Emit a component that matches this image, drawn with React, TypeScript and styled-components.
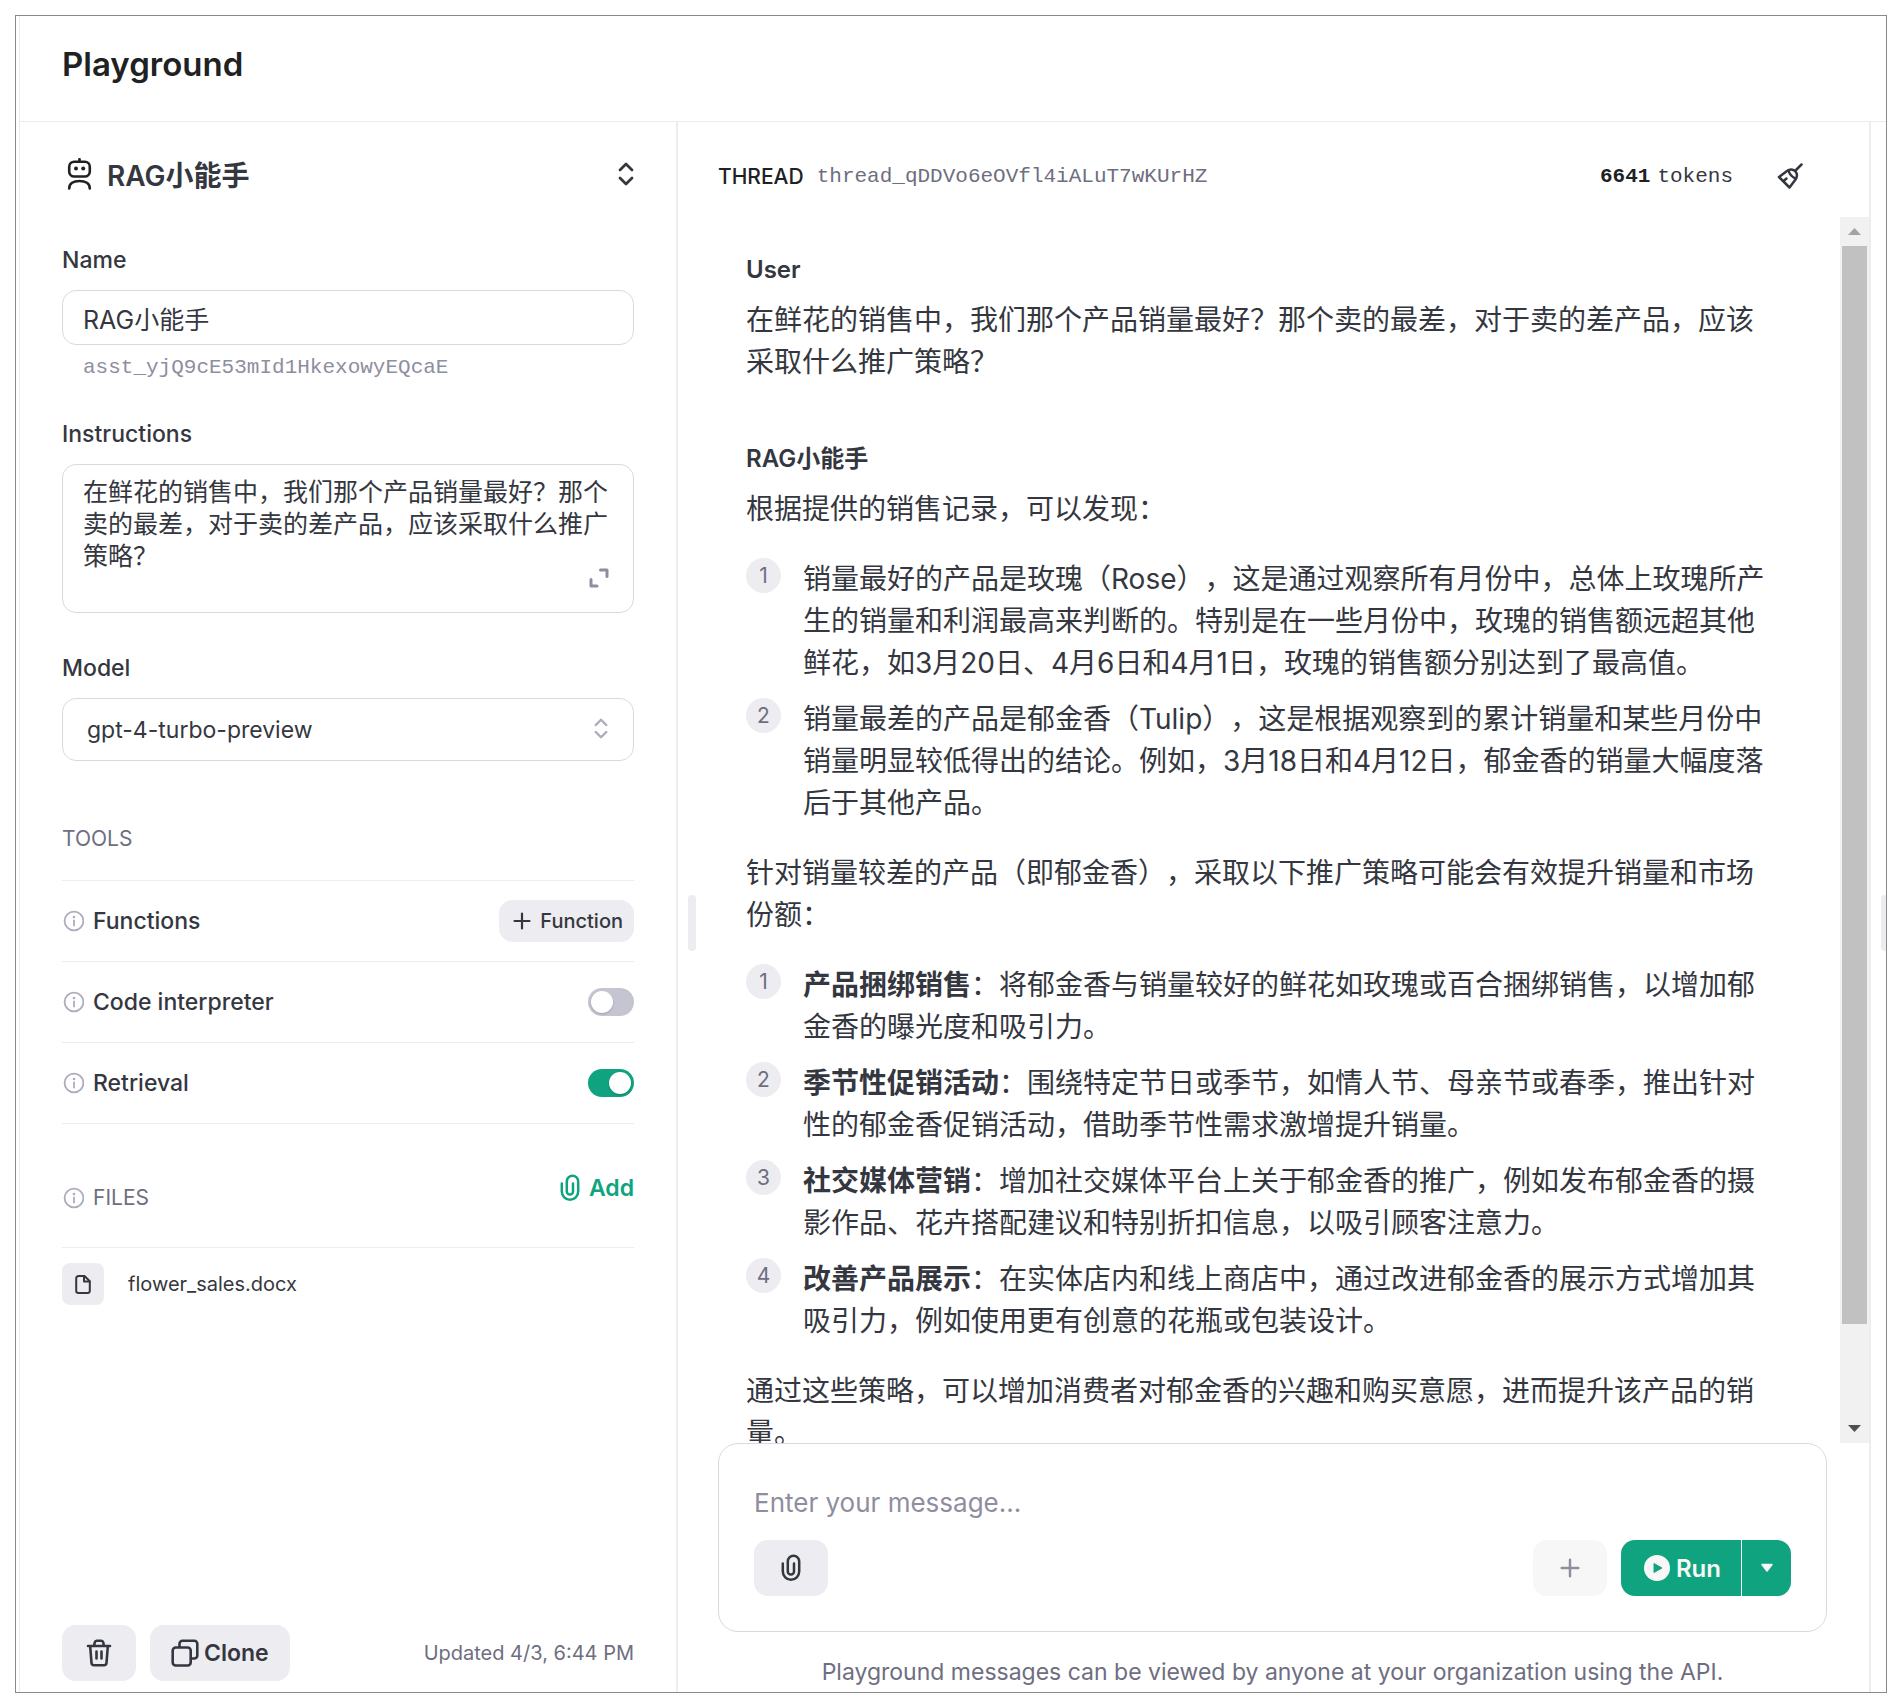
import React from "react";
import styled, { createGlobalStyle } from "styled-components";

const sans = `Inter, "Noto Sans CJK SC", sans-serif`;
const mono = `"Liberation Mono", "Noto Sans CJK SC", monospace`;

const color = {
  text: "#353740",
  strong: "#202123",
  muted: "#6e6e80",
  faint: "#8e8ea0",
  line: "#ececf1",
  field: "#d9d9e3",
  fill: "#ececf1",
  green: "#10a37f",
};

const GlobalStyle = createGlobalStyle`
  * { box-sizing: border-box; }
  body {
    margin: 0;
    background: #fff;
    color: ${color.text};
    font-family: ${sans};
    font-size: 23px;
    text-spacing-trim: space-all;
  }
  button, input, textarea, select { font: inherit; color: inherit; margin: 0; }
  button { cursor: pointer; border: 0; padding: 0; background: none; }
  p, h1, h2, h3, ol { margin: 0; padding: 0; font-weight: inherit; font-size: inherit; }
`;

const Page = styled.div`
  height: 100vh;
  padding: 15px 13px 15px 15px;
`;

const Frame = styled.div`
  height: 100%;
  display: flex;
  flex-direction: column;
  border: 1px solid #8a8a8a;
  padding-left: 3px;
  overflow: hidden;
`;

const Shell = styled.div`
  flex: 1;
  min-height: 0;
  display: flex;
  flex-direction: column;
  border-left: 1px solid #ececec;
`;

const Header = styled.header`
  height: 106px;
  padding: 0 42px 9px;
  display: flex;
  align-items: center;
  border-bottom: 1px solid #ececec;
`;

const Title = styled.h1`
  && { font-size: 33px; font-weight: 600; }
  color: ${color.strong};
`;

const Body = styled.div`
  flex: 1;
  min-height: 0;
  display: flex;
`;

const Sidebar = styled.aside`
  flex: 0 0 658px;
  min-width: 0;
  display: flex;
  flex-direction: column;
  padding: 24px 42px 11px;
  border-right: 2px solid ${color.line};
`;

const Picker = styled.button`
  height: 56px;
  display: flex;
  align-items: center;
  gap: 10px;
  && { font-size: 28px; font-weight: 600; }
  text-align: left;
`;

const PickerName = styled.span`
  flex: 1;
`;

const Field = styled.div<{ $gap: number }>`
  display: flex;
  flex-direction: column;
  margin-top: ${(p) => p.$gap}px;
`;

const Label = styled.label`
  font-weight: 500;
  line-height: 38px;
  margin-bottom: 11px;
`;

const TextInput = styled.input`
  height: 55px;
  padding: 0 20px;
  border: 1px solid ${color.field};
  border-radius: 14px;
  && { font-size: 25px; }
`;

const AssistantId = styled.span`
  font-family: ${mono};
  font-size: 21px;
  line-height: 46px;
  padding-left: 21px;
  color: ${color.faint};
`;

const AreaWrap = styled.div`
  position: relative;
  display: flex;
`;

const TextArea = styled.textarea`
  flex: 1;
  height: 149px;
  padding: 11px 20px;
  border: 1px solid ${color.field};
  border-radius: 14px;
  && { font-size: 25px; }
  line-height: 32px;
  resize: none;
  overflow: hidden;
`;

const ExpandButton = styled.button`
  position: absolute;
  right: 25px;
  bottom: 25px;
  display: flex;
  color: ${color.faint};
`;

const SelectWrap = styled.div`
  position: relative;
  display: flex;
  & > svg {
    position: absolute;
    right: 26px;
    top: 20px;
    pointer-events: none;
  }
`;

const Select = styled.select`
  flex: 1;
  height: 63px;
  padding: 0 24px;
  appearance: none;
  background: #fff;
  border: 1px solid ${color.field};
  border-radius: 14px;
`;

const SectionHead = styled.div<{ $height: number; $top?: number }>`
  display: flex;
  align-items: center;
  gap: 9px;
  height: ${(p) => p.$height}px;
  padding-top: ${(p) => p.$top ?? 0}px;
  border-bottom: 1px solid ${color.line};
`;

const SectionTitle = styled.h2`
  && { font-size: 21px; }
  color: ${color.muted};
`;

const ToolRow = styled.div`
  display: flex;
  align-items: center;
  gap: 9px;
  height: 81px;
  border-bottom: 1px solid ${color.line};
`;

const ToolName = styled.label`
  flex: 1;
  font-weight: 500;
`;

const SoftButton = styled.button<{ $gap?: number; $width?: number }>`
  display: flex;
  align-items: center;
  justify-content: center;
  gap: ${(p) => p.$gap ?? 0}px;
  width: ${(p) => (p.$width ? `${p.$width}px` : "auto")};
  height: 56px;
  padding: 0 21px;
  border-radius: 14px;
  background: ${color.fill};
  && { font-weight: 600; }
`;

const SmallButton = styled(SoftButton)`
  height: 42px;
  padding: 0 11px 0 14px;
  &&& { font-size: 20px; font-weight: 500; }
`;

const Switch = styled.input`
  appearance: none;
  display: flex;
  align-items: center;
  width: 46px;
  height: 28px;
  padding: 0 3px;
  border-radius: 14px;
  background: #c5c5d2;
  &::before {
    content: "";
    width: 22px;
    height: 22px;
    border-radius: 50%;
    background: #fff;
    box-shadow: 0 1px 2px rgba(0, 0, 0, 0.2);
  }
  &:checked { background: ${color.green}; justify-content: flex-end; }
`;

const AddButton = styled.button`
  display: flex;
  align-items: center;
  gap: 9px;
  margin-left: auto;
  padding-bottom: 20px;
  color: ${color.green};
  && { font-weight: 600; }
`;

const FileRow = styled.div`
  display: flex;
  align-items: center;
  gap: 24px;
  margin-top: 15px;
  font-size: 20px;
`;

const FileIcon = styled.span`
  display: flex;
  align-items: center;
  justify-content: center;
  width: 42px;
  height: 42px;
  border-radius: 8px;
  background: ${color.fill};
`;

const SideFooter = styled.footer`
  display: flex;
  align-items: center;
  gap: 14px;
  margin-top: auto;
`;

const Updated = styled.span`
  margin-left: auto;
  font-size: 20px;
  color: ${color.muted};
`;

const Main = styled.main`
  flex: 1;
  min-width: 0;
  display: flex;
  border-right: 2px solid ${color.line};
`;

const Gutter = styled.div<{ $width: number }>`
  flex: 0 0 ${(p) => p.$width}px;
  display: flex;
  align-items: center;
  padding: 31px 0 0 10px;
  overflow: hidden;
`;

const Handle = styled.span`
  flex: 0 0 8px;
  height: 56px;
  border-radius: 4px;
  background: ${color.line};
`;

const Thread = styled.section`
  flex: 1;
  min-width: 0;
  display: flex;
  flex-direction: column;
`;

const ThreadBar = styled.div`
  display: flex;
  align-items: center;
  height: 95px;
  padding: 13px 66px 0 0;
  font-size: 21px;
  color: ${color.strong};
`;

const ThreadLabel = styled.span`
  font-weight: 500;
`;

const ThreadId = styled.span`
  flex: 1;
  padding-left: 13px;
  font-family: ${mono};
  color: ${color.muted};
`;

const Tokens = styled.span`
  padding-right: 44px;
  font-family: ${mono};
  color: ${color.text};
  & > b { color: ${color.strong}; margin-right: 7px; }
`;

const IconButton = styled.button`
  display: flex;
`;

const Scroller = styled.div`
  flex: 1;
  min-height: 0;
  display: flex;
`;

const Messages = styled.div`
  flex: 1;
  min-width: 0;
  padding: 35px 64px 0 28px;
  overflow: hidden;
  font-size: 28px;
  line-height: 42px;
`;

const Message = styled.article`
  display: flex;
  flex-direction: column;
  gap: 12px;
  margin-bottom: 58px;
`;

const Content = styled.div`
  display: flex;
  flex-direction: column;
  gap: 28px;
`;

const Author = styled.h3`
  && { font-size: 24px; font-weight: 600; }
  line-height: 35px;
`;

const List = styled.ol`
  display: flex;
  flex-direction: column;
  gap: 14px;
  list-style: none;
`;

const Item = styled.li`
  display: flex;
  align-items: flex-start;
  gap: 22px;
`;

const Badge = styled.span`
  flex: 0 0 35px;
  height: 35px;
  border-radius: 50%;
  background: ${color.fill};
  color: ${color.muted};
  font-size: 21px;
  line-height: 36px;
  text-align: center;
`;

const Track = styled.div`
  flex: 0 0 29px;
  display: flex;
  flex-direction: column;
  align-items: center;
  background: #f1f1f1;
`;

const Arrow = styled.span`
  flex: 0 0 29px;
  display: flex;
  align-items: center;
`;

const Thumb = styled.span`
  flex: 0 0 calc(92% - 50px);
  width: 25px;
  background: #c1c1c1;
`;

const Spacer = styled.span`
  flex: 1;
`;

const Composer = styled.form`
  display: flex;
  flex-direction: column;
  height: 189px;
  margin-right: 42px;
  padding: 38px 35px 35px;
  border: 1px solid ${color.field};
  border-radius: 20px;
`;

const MessageInput = styled.input`
  height: 42px;
  padding: 0;
  border: 0;
  outline: 0;
  && { font-size: 26px; }
  &::placeholder { color: ${color.faint}; opacity: 1; }
`;

const ComposerRow = styled.div`
  display: flex;
  justify-content: space-between;
  margin-top: 17px;
`;

const ComposerActions = styled.div`
  display: flex;
  gap: 14px;
`;

const QuietButton = styled(SoftButton)`
  background: #f7f7f8;
  color: ${color.faint};
`;

const RunGroup = styled.div`
  display: flex;
  gap: 1px;
`;

const RunButton = styled(SoftButton)`
  padding: 0 20px 0 23px;
  border-radius: 14px 0 0 14px;
  background: ${color.green};
  color: #f7f7f8;
  &&& { font-size: 24px; }
`;

const RunMenu = styled(SoftButton)`
  padding: 0;
  border-radius: 0 14px 14px 0;
  background: ${color.green};
  color: #f7f7f8;
`;

const Notice = styled.p`
  padding: 22px 42px 0 0;
  height: 60px;
  line-height: 36px;
  text-align: center;
  color: ${color.muted};
`;

const line = {
  fill: "none",
  stroke: "currentColor",
  strokeLinecap: "round" as const,
  strokeLinejoin: "round" as const,
};

const RobotIcon = () => (
  <svg width="35" height="32" viewBox="0 0 35 32" {...line} stroke={color.strong} strokeWidth="2.600">
    <path d="M17.500 1.200V3.500" />
    <rect x="7.200" y="3.700" width="20.600" height="14.800" rx="5" />
    <path d="M7.200 30.500C7.200 25.500 11.500 23 17.500 23S27.800 25.500 27.800 30.500" />
    <circle cx="14" cy="10.500" r="2" fill={color.strong} stroke="none" />
    <circle cx="21.200" cy="10.500" r="2" fill={color.strong} stroke="none" />
  </svg>
);

const UpDownIcon = ({ width, height, tone }: { width: number; height: number; tone: string }) => (
  <svg width={width} height={height} viewBox="0 0 16 24" {...line} stroke={tone} strokeWidth="2.800">
    <path d="M2 8L8 2L14 8M2 16L8 22L14 16" />
  </svg>
);

const ExpandIcon = () => (
  <svg width="20" height="20" viewBox="0 0 20 20" {...line} strokeWidth="3">
    <path d="M11.500 2H18V8.500M8 18H2V11.500" />
  </svg>
);

const InfoIcon = () => (
  <svg width="22" height="22" viewBox="0 0 22 22" {...line} stroke="#acacbe" strokeWidth="1.800">
    <circle cx="12" cy="11" r="9.400" />
    <path d="M12 10.500V15.500" />
    <circle cx="12" cy="7" r="1.300" fill="#acacbe" stroke="none" />
  </svg>
);

const PlusIcon = ({ size }: { size: number }) => (
  <svg width={size} height={size} viewBox="0 0 18 18" {...line} strokeWidth="2.200">
    <path d="M9 1.500V16.500M1.500 9H16.500" />
  </svg>
);

const ClipIcon = () => (
  <svg width="20" height="28" viewBox="0 0 20 28" {...line} strokeWidth="2.500">
    <path d="M1.800 9.500V17.500A8.200 8.200 0 0 0 18.200 17.500V7.500A5.700 5.700 0 0 0 6.800 7.500V17.500A3.100 3.100 0 0 0 13 17.500V9.500" />
  </svg>
);

const DocIcon = () => (
  <svg width="16" height="19" viewBox="0 0 16 19" {...line} strokeWidth="2">
    <path d="M9.500 1H3.500A2.300 2.300 0 0 0 1.200 3.300V15.700A2.300 2.300 0 0 0 3.500 18H12.500A2.300 2.300 0 0 0 14.800 15.700V6.300Z" />
    <path d="M9 1.500V6.500H14.500" />
  </svg>
);

const TrashIcon = () => (
  <svg width="26" height="28" viewBox="0 0 26 28" {...line} strokeWidth="2.600">
    <path d="M2 7H24M8 7L8.800 3.300A2 2 0 0 1 10.700 1.800H15.300A2 2 0 0 1 17.200 3.300L18 7M4.200 7.500L5.500 24A2.500 2.500 0 0 0 8 26.300H18A2.500 2.500 0 0 0 20.500 24L21.800 7.500M10.500 12.500V19.500M15.500 12.500V19.500" />
  </svg>
);

const CloneIcon = () => (
  <svg width="28" height="28" viewBox="0 0 28 28" {...line} strokeWidth="2.600">
    <rect x="1.700" y="8.500" width="18" height="18" rx="3" />
    <path d="M8.500 8V4.700A3 3 0 0 1 11.500 1.700H23.300A3 3 0 0 1 26.300 4.700V16.500A3 3 0 0 1 23.300 19.500H20" />
  </svg>
);

const BroomIcon = () => (
  <svg width="26" height="26" viewBox="0 0 26 26" {...line} stroke={color.text} strokeWidth="2.500">
    <path d="M24.500 1.500L18.500 7.500" />
    <path d="M2 14L10 8C13 5.800 16.500 6.300 18.500 8.500C20.500 11 20.300 13.800 18.500 16.500L12.500 24.500Z" />
    <path d="M11.500 7.500C12.500 11 15 14 18.500 15.500M6.500 18L9.500 15.500" />
  </svg>
);

const PlayIcon = () => (
  <svg width="26" height="26" viewBox="0 0 26 26">
    <circle cx="13" cy="13" r="13" fill="#f7f7f8" />
    <path d="M10 8.500V17.500L18 13Z" fill={color.green} stroke={color.green} strokeLinejoin="round" />
  </svg>
);

const Triangle = ({ up, tone }: { up?: boolean; tone: string }) => (
  <svg width="13" height="7" viewBox="0 0 13 7">
    <path d={up ? "M0 7L6.500 0L13 7Z" : "M0 0L6.500 7L13 0Z"} fill={tone} />
  </svg>
);

const CaretIcon = () => (
  <svg width="14" height="10" viewBox="0 0 14 10">
    <path d="M2 1.500H12L7 8Z" fill="currentColor" stroke="currentColor" strokeWidth="1.500" strokeLinejoin="round" />
  </svg>
);

const findings = [
  "销量最好的产品是玫瑰（Rose），这是通过观察所有月份中，总体上玫瑰所产生的销量和利润最高来判断的。特别是在一些月份中，玫瑰的销售额远超其他鲜花，如3月20日、4月6日和4月1日，玫瑰的销售额分别达到了最高值。",
  "销量最差的产品是郁金香（Tulip），这是根据观察到的累计销量和某些月份中销量明显较低得出的结论。例如，3月18日和4月12日，郁金香的销量大幅度落后于其他产品。",
];

const strategies = [
  ["产品捆绑销售", "：将郁金香与销量较好的鲜花如玫瑰或百合捆绑销售，以增加郁金香的曝光度和吸引力。"],
  ["季节性促销活动", "：围绕特定节日或季节，如情人节、母亲节或春季，推出针对性的郁金香促销活动，借助季节性需求激增提升销量。"],
  ["社交媒体营销", "：增加社交媒体平台上关于郁金香的推广，例如发布郁金香的摄影作品、花卉搭配建议和特别折扣信息，以吸引顾客注意力。"],
  ["改善产品展示", "：在实体店内和线上商店中，通过改进郁金香的展示方式增加其吸引力，例如使用更有创意的花瓶或包装设计。"],
];

const question = "在鲜花的销售中，我们那个产品销量最好？那个卖的最差，对于卖的差产品，应该采取什么推广策略？";

function AssistantPanel() {
  return (
    <Sidebar>
      <Picker type="button">
        <RobotIcon />
        <PickerName>RAG小能手</PickerName>
        <UpDownIcon width={16} height={24} tone={color.text} />
      </Picker>
      <Field $gap={39}>
        <Label htmlFor="name">Name</Label>
        <TextInput id="name" defaultValue="RAG小能手" />
        <AssistantId>asst_yjQ9cE53mId1HkexowyEQcaE</AssistantId>
      </Field>
      <Field $gap={24}>
        <Label htmlFor="instructions">Instructions</Label>
        <AreaWrap>
          <TextArea id="instructions" defaultValue={question} />
          <ExpandButton type="button" aria-label="Expand">
            <ExpandIcon />
          </ExpandButton>
        </AreaWrap>
      </Field>
      <Field $gap={36}>
        <Label htmlFor="model">Model</Label>
        <SelectWrap>
          <Select id="model">
            <option>gpt-4-turbo-preview</option>
          </Select>
          <UpDownIcon width={14} height={21} tone="#acacbe" />
        </SelectWrap>
      </Field>
      <Field $gap={36}>
        <SectionHead $height={84}>
          <SectionTitle>TOOLS</SectionTitle>
        </SectionHead>
        <ToolRow>
          <InfoIcon />
          <ToolName as="span">Functions</ToolName>
          <SmallButton type="button" $gap={9}>
            <PlusIcon size={18} />
            Function
          </SmallButton>
        </ToolRow>
        <ToolRow>
          <InfoIcon />
          <ToolName htmlFor="code">Code interpreter</ToolName>
          <Switch id="code" type="checkbox" />
        </ToolRow>
        <ToolRow>
          <InfoIcon />
          <ToolName htmlFor="retrieval">Retrieval</ToolName>
          <Switch id="retrieval" type="checkbox" defaultChecked />
        </ToolRow>
        <SectionHead $height={124} $top={24}>
          <InfoIcon />
          <SectionTitle>FILES</SectionTitle>
          <AddButton type="button">
            <ClipIcon />
            Add
          </AddButton>
        </SectionHead>
        <FileRow>
          <FileIcon>
            <DocIcon />
          </FileIcon>
          flower_sales.docx
        </FileRow>
      </Field>
      <SideFooter>
        <SoftButton type="button" aria-label="Delete" $width={74}>
          <TrashIcon />
        </SoftButton>
        <SoftButton type="button" $gap={5}>
          <CloneIcon />
          Clone
        </SoftButton>
        <Updated>Updated 4/3, 6:44 PM</Updated>
      </SideFooter>
    </Sidebar>
  );
}

function Conversation() {
  return (
    <Messages>
      <Message>
        <Author>User</Author>
        <Content>
          <p>{question}</p>
        </Content>
      </Message>
      <Message>
        <Author>RAG小能手</Author>
        <Content>
          <p>根据提供的销售记录，可以发现：</p>
          <List>
            {findings.map((text, i) => (
              <Item key={i}>
                <Badge>{i + 1}</Badge>
                <p>{text}</p>
              </Item>
            ))}
          </List>
          <p>针对销量较差的产品（即郁金香），采取以下推广策略可能会有效提升销量和市场份额：</p>
          <List>
            {strategies.map(([name, text], i) => (
              <Item key={name}>
                <Badge>{i + 1}</Badge>
                <p>
                  <b>{name}</b>
                  {text}
                </p>
              </Item>
            ))}
          </List>
          <p>通过这些策略，可以增加消费者对郁金香的兴趣和购买意愿，进而提升该产品的销量。</p>
        </Content>
      </Message>
    </Messages>
  );
}

export default function App() {
  return (
    <Page>
      <GlobalStyle />
      <Frame>
        <Shell>
          <Header>
            <Title>Playground</Title>
          </Header>
          <Body>
            <AssistantPanel />
            <Main>
              <Gutter $width={40}>
                <Handle />
              </Gutter>
              <Thread>
                <ThreadBar>
                  <ThreadLabel>THREAD</ThreadLabel>
                  <ThreadId>thread_qDDVo6eOVfl4iALuT7wKUrHZ</ThreadId>
                  <Tokens>
                    <b>6641</b>tokens
                  </Tokens>
                  <IconButton type="button" aria-label="Clear thread">
                    <BroomIcon />
                  </IconButton>
                </ThreadBar>
                <Scroller>
                  <Conversation />
                  <Track aria-hidden="true">
                    <Arrow>
                      <Triangle up tone="#a3a3a3" />
                    </Arrow>
                    <Thumb />
                    <Spacer />
                    <Arrow>
                      <Triangle tone="#505050" />
                    </Arrow>
                  </Track>
                </Scroller>
                <Composer>
                  <MessageInput aria-label="Message" placeholder="Enter your message..." />
                  <ComposerRow>
                    <SoftButton type="button" aria-label="Attach file" $width={74}>
                      <ClipIcon />
                    </SoftButton>
                    <ComposerActions>
                      <QuietButton type="button" aria-label="Add message" $width={74}>
                        <PlusIcon size={20} />
                      </QuietButton>
                      <RunGroup>
                        <RunButton type="submit" $gap={6}>
                          <PlayIcon />
                          Run
                        </RunButton>
                        <RunMenu type="button" aria-label="Run options" $width={49}>
                          <CaretIcon />
                        </RunMenu>
                      </RunGroup>
                    </ComposerActions>
                  </ComposerRow>
                </Composer>
                <Notice>Playground messages can be viewed by anyone at your organization using the API.</Notice>
              </Thread>
            </Main>
            <Gutter $width={15}>
              <Handle />
            </Gutter>
          </Body>
        </Shell>
      </Frame>
    </Page>
  );
}
